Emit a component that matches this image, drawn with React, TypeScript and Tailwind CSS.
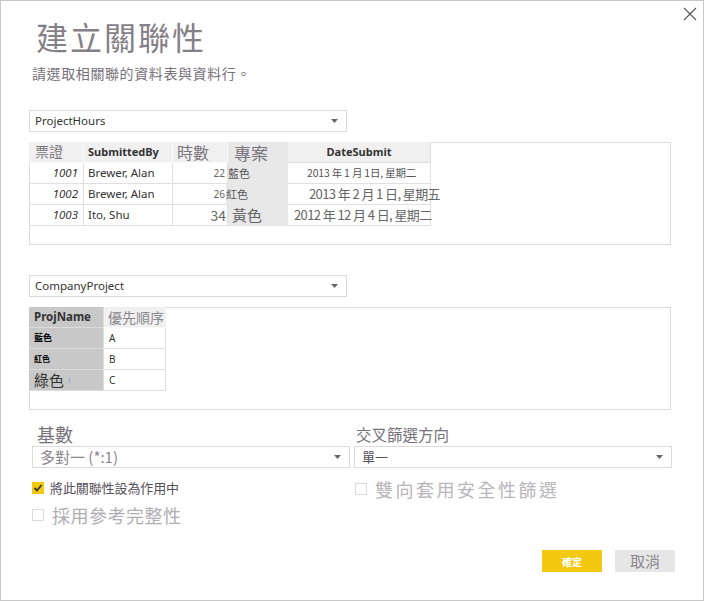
import React from "react";

const cjk = "font-['Noto_Sans_CJK_TC','Noto_Sans',sans-serif]";
const lat = "font-['Noto_Sans','Noto_Sans_CJK_TC',sans-serif]";

function Arrow() {
  return (
    <svg width="7" height="4" viewBox="0 0 7 4" className="shrink-0">
      <path d="M0 0 H7 L3.5 4 Z" fill="#666" />
    </svg>
  );
}

function Dropdown({ children, className }: { children: React.ReactNode; className?: string }) {
  return (
    <div className={`flex h-[22px] w-[318px] items-center justify-between border border-[#dcdcdc] bg-white pl-[5px] pr-[8px] ${className ?? ""}`}>
      <div className="truncate">{children}</div>
      <Arrow />
    </div>
  );
}

const cellB = "border-r border-b border-[#e0e0e0]";

export default function App() {
  return (
    <div className={`relative h-[601px] w-[704px] border border-[#c8c8c8] bg-white ${lat}`}>
      <svg className="absolute left-[682px] top-[6px]" width="14" height="14" viewBox="0 0 14 14">
        <path d="M1 1 L13 13 M13 1 L1 13" stroke="#555" strokeWidth="1.1" />
      </svg>

      <div className={`ml-[35px] mt-[17px] text-[32px] leading-[36px] tracking-[2px] text-[#857f87] ${cjk}`}>建立關聯性</div>
      <div className={`ml-[31px] mt-[9px] text-[14px] leading-[20px] tracking-[0.6px] text-[#77727a] ${cjk}`}>請選取相關聯的資料表與資料行。</div>

      {/* Table 1 */}
      <Dropdown className="ml-[28px] mt-[27px] text-[11.5px] text-[#333]">ProjectHours</Dropdown>
      <div className="ml-[28px] mt-[10px] h-[103px] w-[642px] border border-[#dcdcdc]">
        <div className="-ml-px -mt-px grid grid-cols-[55px_89px_55px_60px_143px] grid-rows-[21px_21px_21px_21px] text-[11.5px] text-[#333]">
          <div className={`bg-[#f0f0f0] border-r border-b border-[#fafafa] pl-[6px] text-[14px] leading-[18px] text-[#7a767c] ${cjk}`}>票證</div>
          <div className={`flex items-center bg-[#f0f0f0] border-r border-b border-[#fafafa] pl-[4px] text-[11px] font-bold`}>SubmittedBy</div>
          <div className={`bg-[#f0f0f0] border-r border-b border-[#fafafa] pl-[4px] text-[16px] leading-[20px] text-[#7a767c] ${cjk}`}>時數</div>
          <div className={`bg-[#e8e8e8] pl-[6px] text-[17px] leading-[21px] text-[#7a767c] ${cjk}`}>專案</div>
          <div className={`flex items-center justify-center bg-[#f0f0f0] border-r border-b border-[#e0e0e0] text-[11px] font-bold`}>DateSubmit</div>

          <div className={`${cellB} flex items-center justify-end pr-[5px] italic`}>1001</div>
          <div className={`${cellB} flex items-center pl-[4px]`}>Brewer, Alan</div>
          <div className={`${cellB} flex items-center justify-end pr-[2px] text-[10px] text-[#666]`}>22</div>
          <div className={`bg-[#e8e8e8] flex items-center text-[11px] text-[#555] ${cjk}`}>藍色</div>
          <div className={`${cellB} flex items-center pl-[19px] text-[10.5px] tracking-[-0.2px] text-[#555] whitespace-nowrap ${cjk}`}>2013 年 1 月 1日, 星期二</div>

          <div className={`${cellB} flex items-center justify-end pr-[5px] italic`}>1002</div>
          <div className={`${cellB} flex items-center pl-[4px]`}>Brewer, Alan</div>
          <div className={`${cellB} flex items-center justify-end pr-[2px] text-[10px] text-[#666]`}>26</div>
          <div className={`bg-[#e8e8e8] flex items-center -ml-[2px] text-[11px] text-[#555] ${cjk}`}>紅色</div>
          <div className={`${cellB} flex items-center pl-[21px] text-[13px] tracking-[-0.6px] text-[#666] whitespace-nowrap ${cjk}`}>2013 年 2 月 1 日, 星期五</div>

          <div className={`${cellB} flex items-center justify-end pr-[5px] italic`}>1003</div>
          <div className={`${cellB} flex items-center pl-[4px]`}>Ito, Shu</div>
          <div className={`${cellB} flex items-center justify-end pr-[1px] text-[14px] text-[#666] ${cjk}`}>34</div>
          <div className={`bg-[#e8e8e8] flex items-center pl-[4px] text-[15px] text-[#666] ${cjk}`}>黃色</div>
          <div className={`${cellB} flex items-center pl-[6px] text-[13px] tracking-[-0.6px] text-[#666] whitespace-nowrap ${cjk}`}>2012 年 12 月 4 日, 星期二</div>
        </div>
      </div>

      {/* Table 2 */}
      <Dropdown className="ml-[28px] mt-[30px] text-[11.5px] text-[#333]">CompanyProject</Dropdown>
      <div className="ml-[28px] mt-[10px] h-[103px] w-[642px] border border-[#dcdcdc]">
        <div className="-ml-px -mt-px grid grid-cols-[75px_62px] grid-rows-[21px_21px_21px_21px] text-[12px] text-[#333]">
          <div className="flex items-center bg-[#c8c8c8] border-r border-b border-[#dcdcdc] pl-[5px] text-[11.5px] font-bold">ProjName</div>
          <div className={`bg-[#f0f0f0] border-b border-[#fafafa] pl-[4px] text-[14px] leading-[20px] text-[#8a868c] ${cjk}`}>優先順序</div>

          <div className={`flex items-center bg-[#c8c8c8] border-r border-b border-[#dcdcdc] pl-[5px] text-[9px] font-bold text-black ${cjk}`}>藍色</div>
          <div className={`${cellB} flex items-center pl-[5px] text-[10px]`}>A</div>

          <div className={`flex items-center bg-[#c8c8c8] border-r border-b border-[#dcdcdc] pl-[5px] text-[8px] font-bold text-black ${cjk}`}>紅色</div>
          <div className={`${cellB} flex items-center pl-[5px] text-[10px]`}>B</div>

          <div className={`flex items-center bg-[#c8c8c8] border-r border-b border-[#dcdcdc] pl-[5px] text-[15px] text-[#333] ${cjk}`}>
            綠色<span className="ml-[4px] text-[8px] text-[#6aa0d8]">ı</span>
          </div>
          <div className={`${cellB} flex items-center pl-[5px] text-[10px]`}>C</div>
        </div>
      </div>

      {/* Options */}
      <div className="ml-[31px] mt-[13px] flex gap-[4px]">
        <div className="flex w-[318px] flex-col">
          <div className={`ml-[5px] text-[18px] leading-[22px] text-[#77727a] ${cjk}`}>基數</div>
          <Dropdown className={`mt-[1px] pl-[7px] text-[15px] text-[#8a868c] ${cjk}`}>多對一 (*:1)</Dropdown>
          <div className="mt-[11px] flex items-center">
            <div className="flex h-[12px] w-[12px] items-center justify-center bg-[#f2c811]">
              <svg width="10" height="10" viewBox="0 0 10 10">
                <path d="M1.5 5 L4 7.5 L8.5 2" stroke="#333" strokeWidth="1.8" fill="none" />
              </svg>
            </div>
            <div className={`ml-[6px] text-[13px] leading-[18px] tracking-[-0.1px] text-[#55505a] ${cjk}`}>將此關聯性設為作用中</div>
          </div>
          <div className="mt-[6px] flex items-center">
            <div className="h-[12px] w-[12px] border border-[#dcdcdc] bg-white" />
            <div className={`ml-[8px] text-[18px] leading-[24px] tracking-[0.5px] text-[#b0aeb2] ${cjk}`}>採用參考完整性</div>
          </div>
        </div>
        <div className="flex w-[318px] flex-col">
          <div className={`ml-[2px] mt-[1px] text-[15.5px] leading-[21px] text-[#77727a] ${cjk}`}>交叉篩選方向</div>
          <Dropdown className={`mt-[1px] pl-[7px] text-[13px] text-[#55505a] ${cjk}`}>單一</Dropdown>
          <div className="mt-[9px] flex items-center">
            <div className="ml-[1px] h-[12px] w-[12px] border border-[#dcdcdc] bg-white" />
            <div className={`ml-[8px] text-[18px] leading-[24px] tracking-[2.5px] text-[#b8b6ba] ${cjk}`}>雙向套用安全性篩選</div>
          </div>
        </div>
      </div>

      <div className="mr-[28px] mt-[23px] flex justify-end gap-[13px]">
        <div className={`flex h-[22px] w-[60px] items-center justify-center bg-[#f2c811] text-[10px] font-bold text-white ${cjk}`}>確定</div>
        <div className={`flex h-[22px] w-[60px] items-center justify-center bg-[#e6e6e6] text-[15px] text-[#8a868c] ${cjk}`}>取消</div>
      </div>
    </div>
  );
}
